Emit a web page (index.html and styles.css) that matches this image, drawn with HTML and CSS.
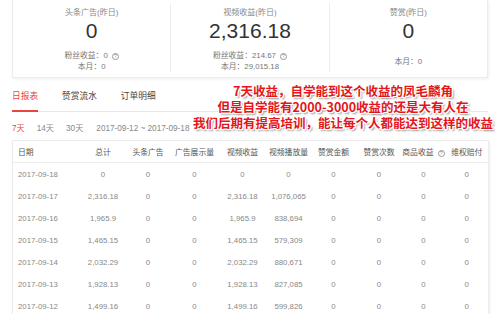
FILE: index.html
```html
<!DOCTYPE html>
<html>
	<head>
		<meta charset="UTF-8">
		<title>收益</title>
		<link rel="stylesheet" href="styles.css">
	</head>
	<body>
		<div class="page">
			<div class="card">
				<div class="stat">
					<div class="stat-label">头条广告(昨日)</div>
					<div class="stat-num">0</div>
					<div class="stat-sub">
						<p>粉丝收益：0 <span class="q">?</span></p>
						<p>本月：0</p>
					</div>
				</div>
				<div class="stat">
					<div class="stat-label">视频收益(昨日)</div>
					<div class="stat-num">2,316.18</div>
					<div class="stat-sub">
						<p>粉丝收益：214.67 <span class="q">?</span></p>
						<p>本月：29,015.18</p>
					</div>
				</div>
				<div class="stat">
					<div class="stat-label">赞赏(昨日)</div>
					<div class="stat-num">0</div>
					<div class="stat-sub">
						<p>本月：0</p>
					</div>
				</div>
			</div>

			<div class="tabs">
				<a href="javascript:;" class="active">日报表</a>
				<a href="javascript:;">赞赏流水</a>
				<a href="javascript:;">订单明细</a>
			</div>

			<div class="filter">
				<a href="javascript:;" class="active">7天</a>
				<a href="javascript:;">14天</a>
				<a href="javascript:;">30天</a>
				<span>2017-09-12 ~ 2017-09-18</span>
			</div>

			<table class="report">
				<colgroup>
					<col class="c-date"><col class="c1"><col class="c2"><col class="c3"><col class="c4">
					<col class="c5"><col class="c6"><col class="c7"><col class="c8"><col class="c9">
				</colgroup>
				<thead>
					<tr>
						<th>日期</th><th>总计</th><th>头条广告</th><th>广告展示量</th><th>视频收益</th>
						<th>视频播放量</th><th>赞赏金额</th><th>赞赏次数</th><th>商品收益 <span class="q">?</span></th><th>维权赔付</th>
					</tr>
				</thead>
				<tbody>
					<tr><td>2017-09-18</td><td>0</td><td>0</td><td>0</td><td>0</td><td>0</td><td>0</td><td>0</td><td>0</td><td>0</td></tr>
					<tr><td>2017-09-17</td><td>2,316.18</td><td>0</td><td>0</td><td>2,316.18</td><td>1,076,065</td><td>0</td><td>0</td><td>0</td><td>0</td></tr>
					<tr><td>2017-09-16</td><td>1,965.9</td><td>0</td><td>0</td><td>1,965.9</td><td>838,694</td><td>0</td><td>0</td><td>0</td><td>0</td></tr>
					<tr><td>2017-09-15</td><td>1,465.15</td><td>0</td><td>0</td><td>1,465.15</td><td>579,309</td><td>0</td><td>0</td><td>0</td><td>0</td></tr>
					<tr><td>2017-09-14</td><td>2,032.29</td><td>0</td><td>0</td><td>2,032.29</td><td>880,671</td><td>0</td><td>0</td><td>0</td><td>0</td></tr>
					<tr><td>2017-09-13</td><td>1,928.13</td><td>0</td><td>0</td><td>1,928.13</td><td>827,085</td><td>0</td><td>0</td><td>0</td><td>0</td></tr>
					<tr><td>2017-09-12</td><td>1,499.16</td><td>0</td><td>0</td><td>1,499.16</td><td>599,826</td><td>0</td><td>0</td><td>0</td><td>0</td></tr>
				</tbody>
			</table>

			<div class="note">
				<p>7天收益，自学能到这个收益的凤毛麟角</p>
				<p>但是自学能有2000-3000收益的还是大有人在</p>
				<p>我们后期有提高培训，能让每个人都能达到这样的收益</p>
			</div>
		</div>
	</body>
</html>
```

FILE: styles.css
```css
*{
    margin: 0;
    padding: 0;
}
body{
    background: #fff;
    font-family: "Liberation Sans", "Noto Sans CJK SC", sans-serif;
    color: #777;
    overflow: hidden;
}
.page{
    position: relative;
    padding: 0 11px 0 12px;
}
.card{
    display: flex;
    padding: 3px 0 5px;
    border: 1px solid #ececec;
    border-top: 0;
    box-shadow: 1px 1px 3px rgba(0,0,0,.07);
}
.stat{
    flex: 1;
    padding-top: 4px;
    text-align: center;
    border-left: 1px solid #ededed;
}
.stat:first-child{
    border-left: 0;
}
.stat-label{
    font-size: 8px;
    line-height: 12px;
    color: #888;
}
.stat-num{
    font-size: 21px;
    line-height: 24px;
    color: #333;
}
.stat-sub{
    display: flex;
    flex-direction: column;
    justify-content: center;
    height: 22px;
    margin-top: 7px;
    font-size: 7.8px;
    line-height: 11px;
    color: #777;
}
.q{
    display: inline-block;
    width: 5px;
    height: 5px;
    margin-left: 2px;
    border: 1px solid #999;
    border-radius: 50%;
    font-size: 5px;
    line-height: 5px;
    text-align: center;
    color: #888;
    vertical-align: 0;
}
.tabs{
    display: flex;
    margin-top: 12px;
    border-bottom: 1px solid #e8e8e8;
}
.tabs a{
    margin-right: 24px;
    padding-bottom: 8px;
    margin-bottom: -1px;
    border-bottom: 2px solid transparent;
    font-size: 8.7px;
    line-height: 12px;
    color: #444;
    text-decoration: none;
}
.tabs a.active{
    color: #e8453c;
    border-bottom-color: #e8453c;
}
.filter{
    display: flex;
    gap: 12px;
    margin-top: 11px;
    font-size: 8.2px;
    line-height: 12px;
    color: #888;
}
.filter a{
    color: #888;
    text-decoration: none;
}
.filter a.active{
    color: #e8453c;
}
.filter span{
    margin-left: 1px;
}
.report{
    width: 100%;
    margin-top: 5px;
    border-collapse: collapse;
    table-layout: fixed;
    border: 1px solid #ececec;
    box-shadow: 1px 1px 3px rgba(0,0,0,.07);
    font-size: 7.8px;
}
.c-date{ width: 68px; }
.c1{ width: 45px; }
.c2{ width: 45px; }
.c3{ width: 48px; }
.c4{ width: 48px; }
.c5{ width: 44px; }
.c6{ width: 46px; }
.c7{ width: 45px; }
.c8{ width: 44px; }
.c9{ width: 43px; }
.report th{
    height: 21px;
    font-weight: normal;
    color: #555;
    text-align: center;
    white-space: nowrap;
    border-bottom: 1px solid #ececec;
    font-size: 7.8px;
}
.report td{
    height: 22px;
    text-align: center;
    color: #888;
}
.report th:first-child,
.report td:first-child{
    padding-left: 5px;
    text-align: left;
}
.report .q{
    width: 5px;
    height: 5px;
}
.note{
    position: absolute;
    left: 183px;
    top: 83px;
    width: 320px;
    text-align: center;
    font-family: "Noto Sans CJK SC", sans-serif;
    font-size: 12.5px;
    font-weight: bold;
    line-height: 16px;
    color: #e3161b;
    text-shadow: 1px 0 0 #fff, -1px 0 0 #fff, 0 1px 0 #fff, 0 -1px 0 #fff,
        1px 1px 0 #fff, -1px -1px 0 #fff, 1px -1px 0 #fff, -1px 1px 0 #fff,
        2px 2px 2px rgba(0,0,0,.45);
}
```
